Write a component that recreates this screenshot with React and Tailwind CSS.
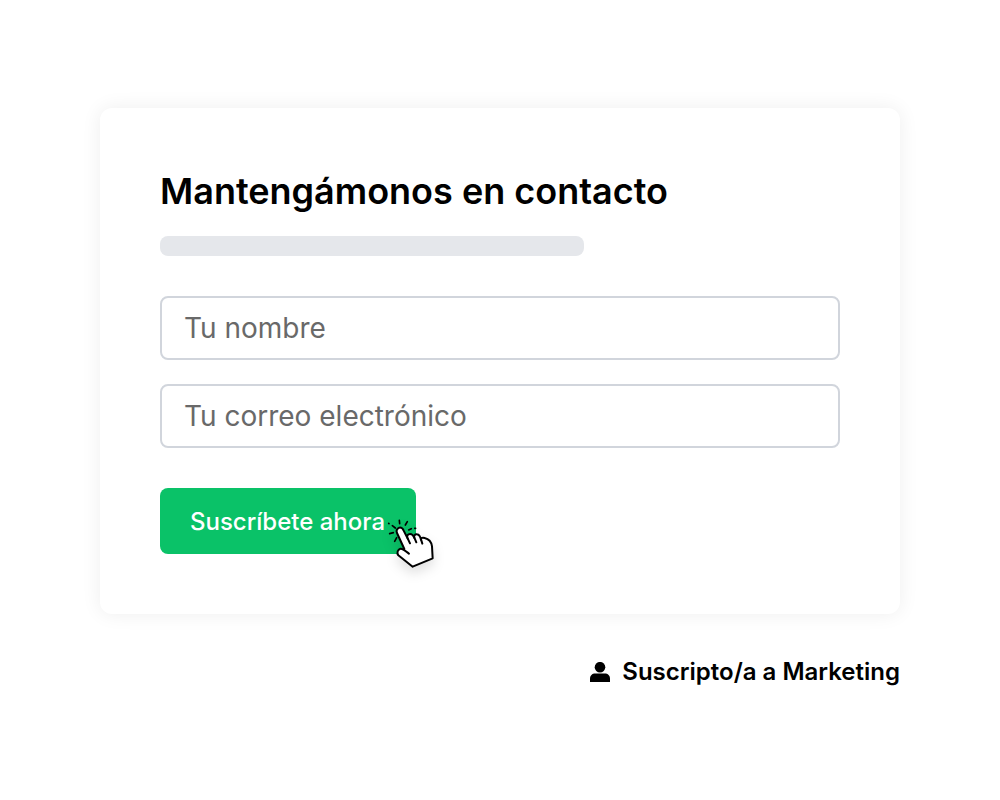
function PointerIcon() {
  return (
    <svg
      viewBox="0 0 225 225"
      fill="none"
      stroke="black"
      strokeWidth="6"
      strokeLinecap="round"
      strokeLinejoin="round"
      aria-hidden="true"
      className="pointer-events-none absolute top-[17px] left-[215px] size-[75px] overflow-visible drop-shadow-[0_6px_6px_rgba(0,0,0,0.12)]"
    >
      {/* Hand */}
      <path
        d="M88 132 L66 84 C62 75 67 71 73 68 C79 67 83 70 86 77 L98 101 C94 91 99 87 105 87 C111 87 115 91 118 99 C116 91 120 87 126 88 C133 89 136 95 138 104 C138 99 142 97 149 99 C163 102 169 110 171 124 L173 160 L113 185 L70 151 C64 143 69 133 76 131 C83 130 92 138 102 146"
        fill="white"
      />
      <path d="M98 100 L105 115 M118 98 L124 112 M138 103 L142 116" />

      {/* Click rays */}
      <path
        d="M73 46 L74 56 M97 50 L91 60 M52 62 L61 69 M44 86 L55 83 M65 98 L59 109 M101 75 L109 71 M41 55 L42 56 M119 70 L122 70"
        strokeWidth="5"
      />
    </svg>
  );
}

function PersonIcon() {
  return (
    <svg viewBox="0 0 20 20" fill="currentColor" aria-hidden="true" className="size-5">
      <circle cx="10" cy="5.2" r="5.3" />
      <path d="M0 20v-3c0-3.4 2-5.4 5.400-5.400h9.200c3.400 0 5.400 2 5.400 5.400v3z" />
    </svg>
  );
}

const fields = [
  { id: "name", type: "text", label: "Tu nombre" },
  { id: "email", type: "email", label: "Tu correo electrónico" },
];

export default function App() {
  return (
    <main className="mx-auto max-w-[800px] pt-27 pb-10 font-['Inter',sans-serif] text-black">
      <form
        onSubmit={(e) => e.preventDefault()}
        className="rounded-xl bg-white p-15 shadow-[0_0_20px_rgba(0,0,0,0.07)]"
      >
        <h1 className="text-4xl leading-[46px] font-semibold">
          Mantengámonos en contacto
        </h1>
        <div className="mt-[22px] h-5 w-[424px] max-w-full rounded-lg bg-gray-200" />

        {/* Fields */}
        <div className="mt-10 space-y-6">
          {fields.map((field) => (
            <input
              key={field.id}
              id={field.id}
              type={field.type}
              aria-label={field.label}
              placeholder={field.label}
              className="block h-16 w-full rounded-lg border-2 border-gray-300 px-[22px] text-[28px] placeholder:text-[#696969]"
            />
          ))}
        </div>

        {/* Submit */}
        <div className="relative mt-10 w-fit">
          <button
            type="submit"
            className="block h-[66px] w-64 rounded-lg bg-[#0ac268] px-[30px] pt-0.5 text-left text-2xl font-medium text-white"
          >
            Suscríbete ahora
          </button>
          <PointerIcon />
        </div>
      </form>

      <p className="mt-10 flex items-center justify-end gap-3 text-2xl leading-9 font-semibold">
        <PersonIcon />
        Suscripto/a a Marketing
      </p>
    </main>
  );
}
